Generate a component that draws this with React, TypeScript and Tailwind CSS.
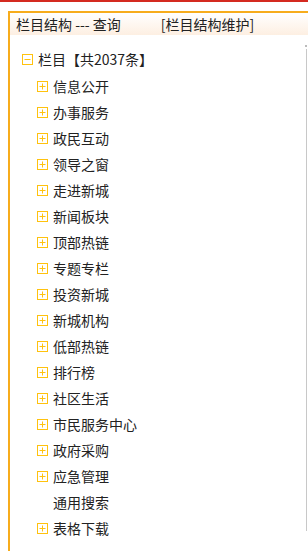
const items = [
  "信息公开",
  "办事服务",
  "政民互动",
  "领导之窗",
  "走进新城",
  "新闻板块",
  "顶部热链",
  "专题专栏",
  "投资新城",
  "新城机构",
  "低部热链",
  "排行榜",
  "社区生活",
  "市民服务中心",
  "政府采购",
  "应急管理",
  "通用搜索",
  "表格下载",
];

const noIcon = ["通用搜索"];

function ToggleIcon({ open }: { open?: boolean }) {
  return (
    <svg width="11" height="11" viewBox="0 0 11 11" className="shrink-0">
      <rect x="0.5" y="0.5" width="10" height="10" fill="none" stroke="#ffc20e" strokeWidth="1" />
      <line x1="2.5" y1="5.5" x2="8.5" y2="5.5" stroke="#ffc20e" strokeWidth="1" />
      {!open && <line x1="5.5" y1="2.5" x2="5.5" y2="8.5" stroke="#ffc20e" strokeWidth="1" />}
    </svg>
  );
}

export default function App() {
  return (
    <div
      className="h-[551px] overflow-hidden bg-white border-t-2 border-[#d42a20] text-[14px] text-[#222]"
      style={{ fontFamily: '"Noto Sans CJK SC", "Noto Sans", sans-serif' }}
    >
      <div className="ml-[8px] mt-[9px] h-[600px] border-l-2 border-t-2 border-[#f7ac1c] relative">
        {/* Header */}
        <div className="h-[22px] flex items-center pl-[6px] bg-gradient-to-b from-white to-[#fdefe2] leading-none">
          <span>栏目结构 --- 查询</span>
          <span className="ml-[40px]">[栏目结构维护]</span>
        </div>

        {/* Tree */}
        <div className="pt-[11px] pl-[12px]">
          <div className="h-[27px] flex items-center gap-[5px]">
            <ToggleIcon open />
            <span>栏目【共2037条】</span>
          </div>
          <div className="pl-[15px]">
            {items.map((name) => (
              <div key={name} className="h-[26px] flex items-center gap-[5px]">
                {noIcon.includes(name) ? <span className="w-[11px]" /> : <ToggleIcon />}
                <span>{name}</span>
              </div>
            ))}
          </div>
        </div>

        {/* scrollbar track */}
        <div className="absolute right-[1px] top-[36px] w-[1px] h-[482px] bg-[#c8c8c8]" />
        <div className="absolute right-[1px] top-[32px] w-[2px] h-[2px] bg-[#bbb]" />
      </div>
    </div>
  );
}
